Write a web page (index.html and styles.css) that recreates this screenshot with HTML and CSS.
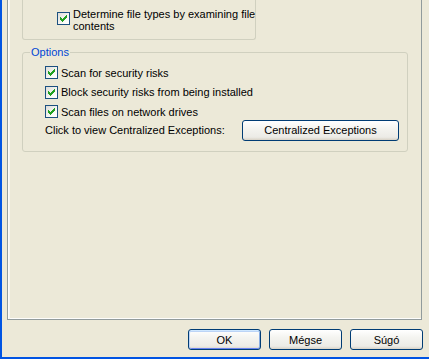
FILE: index.html
```html
<!DOCTYPE html>
<html lang="en">
<head>
    <meta charset="UTF-8">
    <title>Scan Settings</title>
    <link rel="stylesheet" href="styles.css">
</head>
<body>
    <div class="window">
        <div class="tab-panel">
            <div class="group group-top">
                <label class="check-row multi">
                    <span class="checkbox checked"></span>
                    <span class="check-text">Determine file types by examining file contents</span>
                </label>
            </div>

            <fieldset class="group group-options">
                <legend>Options</legend>
                <label class="check-row">
                    <span class="checkbox checked"></span>
                    <span>Scan for security risks</span>
                </label>
                <label class="check-row">
                    <span class="checkbox checked"></span>
                    <span>Block security risks from being installed</span>
                </label>
                <label class="check-row">
                    <span class="checkbox checked"></span>
                    <span>Scan files on network drives</span>
                </label>
                <div class="link-row">
                    <span>Click to view Centralized Exceptions:</span>
                    <button type="button" class="xp-button wide">Centralized Exceptions</button>
                </div>
            </fieldset>
        </div>

        <div class="dialog-buttons">
            <button type="button" class="xp-button default">OK</button>
            <button type="button" class="xp-button">Mégse</button>
            <button type="button" class="xp-button">Súgó</button>
        </div>
    </div>
</body>
</html>
```

FILE: styles.css
```css
html, body {
    margin: 0;
    padding: 0;
    background-color: #ece9d8;
}
body {
    font-family: "Liberation Sans", Arial, sans-serif;
    font-size: 11px;
    color: #000;
}
.window {
    box-sizing: border-box;
    width: 429px;
    height: 359px;
    border-left: 2px solid #0054e3;
    border-bottom: 2px solid #0054e3;
    padding-left: 5px;
    display: flex;
    flex-direction: column;
}
.tab-panel {
    box-sizing: border-box;
    width: 415px;
    height: 320px;
    border: 1px solid #919b9c;
    border-top: none;
    box-shadow: inset 1px 0 #fdfdfb, inset 2px 0 #f6f5ef, inset 0 -1px #fdfdfb;
    padding: 0 13px 0 14px;
}
.group {
    border: 1px solid #d0d0bf;
    border-radius: 3px;
    margin: 0;
}
.group-top {
    width: 234px;
    height: 40px;
    border-top: none;
    border-radius: 0 0 3px 3px;
    box-sizing: border-box;
    padding: 8px 0 0 34px;
}
.group-options {
    margin-top: 6px;
    height: 106px;
    box-sizing: border-box;
    padding: 5px 8px 0 22px;
    display: flex;
    flex-direction: column;
}
.group-options legend {
    color: #0046d5;
    padding: 0 1px;
    margin-left: -15px;
}
.check-row {
    display: flex;
    align-items: center;
    gap: 3px;
    height: 19.5px;
}
.check-row.multi {
    align-items: flex-start;
    height: auto;
}
.check-row.multi .checkbox {
    margin-top: 4px;
}
.check-text {
    flex: none;
    width: 184px;
    line-height: 12px;
}
.checkbox {
    flex: none;
    box-sizing: border-box;
    width: 13px;
    height: 13px;
    border: 1px solid #1c5180;
    background: linear-gradient(135deg, #dcdcd7, #fbfbf9 70%, #fff);
    position: relative;
}
.checkbox.checked::after {
    content: "";
    position: absolute;
    left: 2px;
    top: 2px;
    width: 7px;
    height: 7px;
    background: url("data:image/svg+xml;utf8,<svg xmlns='http://www.w3.org/2000/svg' width='7' height='7' viewBox='0 0 7 7'><path d='M0 2h1v1h1v1h1v-1h1v-1h1v-1h1v-1h1v3h-1v1h-1v1h-1v1h-1v1h-1v-1h-1v-1h-1v-1h-1z' fill='%2321a121'/></svg>") no-repeat;
}
.link-row {
    display: flex;
    align-items: center;
    justify-content: space-between;
    margin-top: -2px;
}
.xp-button {
    font-family: inherit;
    font-size: 11px;
    color: #000;
    box-sizing: border-box;
    height: 21px;
    width: 73px;
    padding: 0;
    border: 1px solid #003c74;
    border-radius: 3px;
    background: linear-gradient(#ffffff, #f4f4f0 40%, #ecebe6 85%, #d8d2c6);
}
.xp-button.wide {
    width: 157px;
}
.xp-button.default {
    box-shadow: inset 0 1px #cee7ff, inset 1px 0 #bcd4f6, inset -1px 0 #89ade4, inset 0 -1px #6982ee, inset 0 2px #bcd4f6;
}
.dialog-buttons {
    display: flex;
    justify-content: flex-end;
    gap: 8px;
    padding: 9px 6px 0 0;
}
```
